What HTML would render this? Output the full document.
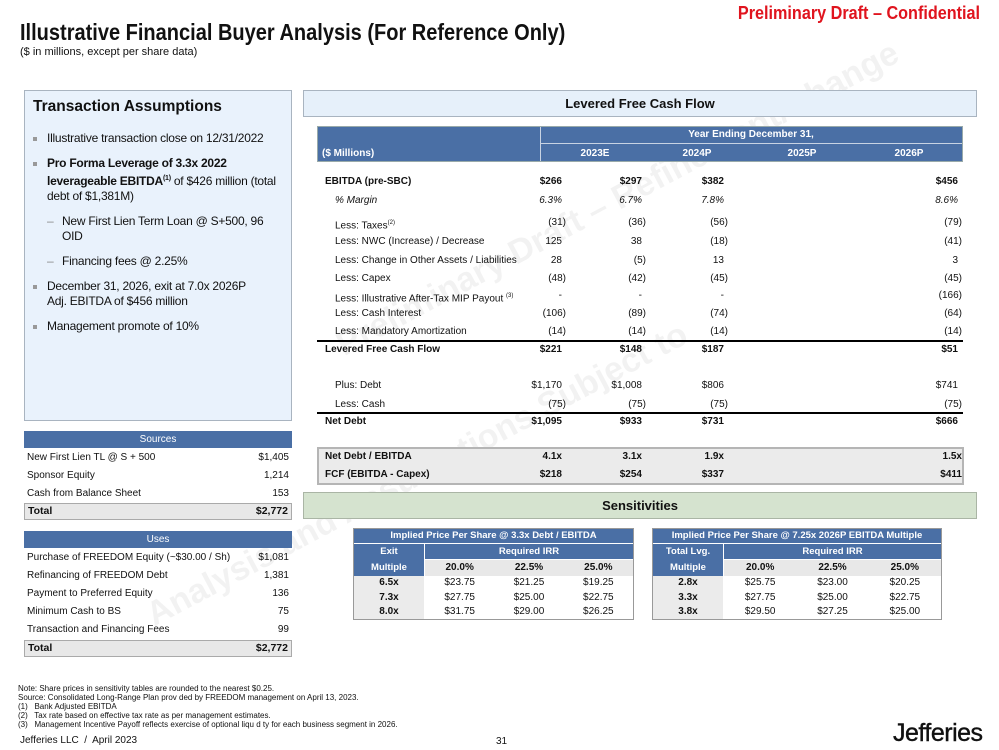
<!DOCTYPE html>
<html><head><meta charset="utf-8"><style>
*{margin:0;padding:0;box-sizing:border-box}
body{width:999px;height:750px;position:relative;background:#fff;font-family:"Liberation Sans Narrow","Liberation Sans",sans-serif;color:#111;overflow:hidden}
.a{position:absolute;white-space:nowrap}
.n{font-family:"Liberation Sans",sans-serif}
.blue{background:#4a6fa5;color:#fff}
.r{position:absolute;font-size:10px;line-height:12px;white-space:nowrap}
.b{font-weight:bold}
</style></head><body>
<div class="a b" style="right:19px;top:3px;font-size:18px;color:#e0141e;transform:scaleX(0.9);transform-origin:right top">Preliminary Draft – Confidential</div>
<div class="a b" style="left:20px;top:19px;font-size:23px;transform:scaleX(0.87);transform-origin:left top">Illustrative Financial Buyer Analysis (For Reference Only)</div>
<div class="a" style="left:20px;top:46px;font-size:11px">($ in millions, except per share data)</div>

<!-- watermark -->
<div class="a b" style="left:330px;top:330px;font-size:34px;color:rgba(0,0,0,0.05);transform:rotate(-28deg);transform-origin:left top">Preliminary Draft – Refinement/Change</div>
<div class="a b" style="left:140px;top:600px;font-size:34px;color:rgba(0,0,0,0.05);transform:rotate(-28deg);transform-origin:left top">Analysis and Assumptions Subject to</div>

<!-- Transaction assumptions -->
<div class="a" style="left:24px;top:90px;width:268px;height:331px;background:#e9f2fc;border:1px solid #a9b4c0"></div>
<div class="a b" style="left:33px;top:98px;font-size:15.5px">Transaction Assumptions</div>
<div class="a n" style="left:33px;top:131px;width:256px;font-size:12px;line-height:15px;white-space:normal;letter-spacing:-0.25px">
<div style="position:relative;padding-left:14px;margin-bottom:10px"><span style="position:absolute;left:0;top:6px;width:4px;height:4px;background:#999"></span>Illustrative transaction close on 12/31/2022</div>
<div style="position:relative;padding-left:14px;margin-bottom:10px"><span style="position:absolute;left:0;top:6px;width:4px;height:4px;background:#999"></span><b>Pro Forma Leverage of 3.3x 2022 leverageable EBITDA<sup style="font-size:7px">(1)</sup></b> of $426 million (total debt of $1,381M)</div>
<div style="position:relative;padding-left:29px;margin-bottom:10px"><span style="position:absolute;left:14px;top:0;color:#888">–</span>New First Lien Term Loan @ S+500, 96<br>OID</div>
<div style="position:relative;padding-left:29px;margin-bottom:10px"><span style="position:absolute;left:14px;top:0;color:#888">–</span>Financing fees @ 2.25%</div>
<div style="position:relative;padding-left:14px;margin-bottom:10px"><span style="position:absolute;left:0;top:6px;width:4px;height:4px;background:#999"></span>December 31, 2026, exit at 7.0x 2026P<br>Adj. EBITDA of $456 million</div>
<div style="position:relative;padding-left:14px"><span style="position:absolute;left:0;top:6px;width:4px;height:4px;background:#999"></span>Management promote of 10%</div>
</div>

<!-- Sources -->
<div class="a blue n" style="left:24px;top:431px;width:268px;height:17px;font-size:10px;line-height:17px;text-align:center">Sources</div>
<div class="a n" style="left:27px;top:449px;width:262px;font-size:10px;line-height:18px">
<div style="display:flex;justify-content:space-between"><span>New First Lien TL @ S + 500</span><span>$1,405</span></div>
<div style="display:flex;justify-content:space-between"><span>Sponsor Equity</span><span>1,214</span></div>
<div style="display:flex;justify-content:space-between"><span>Cash from Balance Sheet</span><span>153</span></div>
</div>
<div class="a b" style="left:24px;top:503px;width:268px;height:17px;background:#e8e8e8;border:1px solid #aaa;font-size:10.5px;line-height:15px;padding:0 3px;display:flex;justify-content:space-between"><span>Total</span><span>$2,772</span></div>

<!-- Uses -->
<div class="a blue n" style="left:24px;top:531px;width:268px;height:17px;font-size:10px;line-height:17px;text-align:center">Uses</div>
<div class="a n" style="left:27px;top:549px;width:262px;font-size:10px;line-height:18px">
<div style="display:flex;justify-content:space-between"><span>Purchase of FREEDOM Equity (~$30.00 / Sh)</span><span>$1,081</span></div>
<div style="display:flex;justify-content:space-between"><span>Refinancing of FREEDOM Debt</span><span>1,381</span></div>
<div style="display:flex;justify-content:space-between"><span>Payment to Preferred Equity</span><span>136</span></div>
<div style="display:flex;justify-content:space-between"><span>Minimum Cash to BS</span><span>75</span></div>
<div style="display:flex;justify-content:space-between"><span>Transaction and Financing Fees</span><span>99</span></div>
</div>
<div class="a b" style="left:24px;top:640px;width:268px;height:17px;background:#e8e8e8;border:1px solid #aaa;font-size:10.5px;line-height:15px;padding:0 3px;display:flex;justify-content:space-between"><span>Total</span><span>$2,772</span></div>

<!-- LFCF banner -->
<div class="a b" style="left:303px;top:90px;width:674px;height:27px;background:#e6f0fa;border:1px solid #a9b4c0;font-size:13px;line-height:25px;text-align:center">Levered Free Cash Flow</div>

<!-- table header -->
<div class="a blue" style="left:317px;top:126px;width:646px;height:36px;border:1px solid #9aa"></div>
<div class="a" style="left:540px;top:143px;width:422px;height:1px;background:#c8d3e3"></div>
<div class="a" style="left:540px;top:127px;width:1px;height:34px;background:#c8d3e3"></div>
<div class="r b" style="left:540px;width:422px;top:129px;text-align:center;color:#fff">Year Ending December 31,</div>
<div class="r b" style="left:322px;top:148px;color:#fff">($ Millions)</div>
<div class="r b" style="left:560px;width:70px;top:148px;text-align:center;color:#fff">2023E</div>
<div class="r b" style="left:662px;width:70px;top:148px;text-align:center;color:#fff">2024P</div>
<div class="r b" style="left:767px;width:70px;top:148px;text-align:center;color:#fff">2025P</div>
<div class="r b" style="left:874px;width:70px;top:148px;text-align:center;color:#fff">2026P</div>

<!-- rows -->
<div class="r b" style="left:325px;top:176px">EBITDA (pre-SBC)</div>
<div class="r b" style="right:437px;top:176px">$266</div><div class="r b" style="right:357px;top:176px">$297</div><div class="r b" style="right:275px;top:176px">$382</div><div class="r b" style="right:41px;top:176px">$456</div>
<div class="r" style="left:335px;top:195px;font-style:italic">% Margin</div>
<div class="r" style="right:437px;top:195px;font-style:italic">6.3%</div><div class="r" style="right:357px;top:195px;font-style:italic">6.7%</div><div class="r" style="right:275px;top:195px;font-style:italic">7.8%</div><div class="r" style="right:41px;top:195px;font-style:italic">8.6%</div>

<div class="r" style="left:335px;top:217px">Less: Taxes<sup style="font-size:6px">(2)</sup></div>
<div class="r" style="right:433px;top:217px">(31)</div><div class="r" style="right:353px;top:217px">(36)</div><div class="r" style="right:271px;top:217px">(56)</div><div class="r" style="right:37px;top:217px">(79)</div>
<div class="r" style="left:335px;top:236px">Less: NWC (Increase) / Decrease</div>
<div class="r" style="right:437px;top:236px">125</div><div class="r" style="right:357px;top:236px">38</div><div class="r" style="right:271px;top:236px">(18)</div><div class="r" style="right:37px;top:236px">(41)</div>
<div class="r" style="left:335px;top:255px">Less: Change in Other Assets / Liabilities</div>
<div class="r" style="right:437px;top:255px">28</div><div class="r" style="right:353px;top:255px">(5)</div><div class="r" style="right:275px;top:255px">13</div><div class="r" style="right:41px;top:255px">3</div>
<div class="r" style="left:335px;top:273px">Less: Capex</div>
<div class="r" style="right:433px;top:273px">(48)</div><div class="r" style="right:353px;top:273px">(42)</div><div class="r" style="right:271px;top:273px">(45)</div><div class="r" style="right:37px;top:273px">(45)</div>
<div class="r" style="left:335px;top:290px">Less: Illustrative After-Tax MIP Payout <sup style="font-size:6px">(3)</sup></div>
<div class="r" style="right:437px;top:290px">-</div><div class="r" style="right:357px;top:290px">-</div><div class="r" style="right:275px;top:290px">-</div><div class="r" style="right:37px;top:290px">(166)</div>
<div class="r" style="left:335px;top:308px">Less: Cash Interest</div>
<div class="r" style="right:433px;top:308px">(106)</div><div class="r" style="right:353px;top:308px">(89)</div><div class="r" style="right:271px;top:308px">(74)</div><div class="r" style="right:37px;top:308px">(64)</div>
<div class="r" style="left:335px;top:326px">Less: Mandatory Amortization</div>
<div class="r" style="right:433px;top:326px">(14)</div><div class="r" style="right:353px;top:326px">(14)</div><div class="r" style="right:271px;top:326px">(14)</div><div class="r" style="right:37px;top:326px">(14)</div>
<div class="a" style="left:317px;top:340px;width:646px;height:2px;background:#000"></div>
<div class="r b" style="left:325px;top:344px">Levered Free Cash Flow</div>
<div class="r b" style="right:437px;top:344px">$221</div><div class="r b" style="right:357px;top:344px">$148</div><div class="r b" style="right:275px;top:344px">$187</div><div class="r b" style="right:41px;top:344px">$51</div>

<div class="r" style="left:335px;top:380px">Plus: Debt</div>
<div class="r" style="right:437px;top:380px">$1,170</div><div class="r" style="right:357px;top:380px">$1,008</div><div class="r" style="right:275px;top:380px">$806</div><div class="r" style="right:41px;top:380px">$741</div>
<div class="r" style="left:335px;top:399px">Less: Cash</div>
<div class="r" style="right:433px;top:399px">(75)</div><div class="r" style="right:353px;top:399px">(75)</div><div class="r" style="right:271px;top:399px">(75)</div><div class="r" style="right:37px;top:399px">(75)</div>
<div class="a" style="left:317px;top:412px;width:646px;height:2px;background:#000"></div>
<div class="r b" style="left:325px;top:416px">Net Debt</div>
<div class="r b" style="right:437px;top:416px">$1,095</div><div class="r b" style="right:357px;top:416px">$933</div><div class="r b" style="right:275px;top:416px">$731</div><div class="r b" style="right:41px;top:416px">$666</div>

<div class="a" style="left:317px;top:447px;width:647px;height:38px;background:#ebebeb;border:2px solid #b5b5b5"></div>
<div class="r b" style="left:325px;top:451px">Net Debt / EBITDA</div>
<div class="r b" style="right:437px;top:451px">4.1x</div><div class="r b" style="right:357px;top:451px">3.1x</div><div class="r b" style="right:275px;top:451px">1.9x</div><div class="r b" style="right:37px;top:451px">1.5x</div>
<div class="r b" style="left:325px;top:469px">FCF (EBITDA - Capex)</div>
<div class="r b" style="right:437px;top:469px">$218</div><div class="r b" style="right:357px;top:469px">$254</div><div class="r b" style="right:275px;top:469px">$337</div><div class="r b" style="right:37px;top:469px">$411</div>

<!-- Sensitivities -->
<div class="a b" style="left:303px;top:492px;width:674px;height:27px;background:#d5e3cf;border:1px solid #aab5a5;font-size:13px;line-height:25px;text-align:center">Sensitivities</div>

<!-- table 1 -->
<div class="a" style="left:353px;top:528px;width:281px;height:92px;border:1px solid #999;background:#fff"></div>
<div class="a blue b" style="left:354px;top:529px;width:279px;height:14px;font-size:9.5px;line-height:14px;text-align:center">Implied Price Per Share @ 3.3x Debt / EBITDA</div>
<div class="a blue b" style="left:354px;top:544px;width:70px;height:32px;font-size:9.5px;line-height:16px;text-align:center">Exit<br>Multiple</div>
<div class="a blue b" style="left:425px;top:544px;width:208px;height:15px;font-size:9.5px;line-height:15px;text-align:center">Required IRR</div>
<div class="a b" style="left:425px;top:560px;width:208px;height:16px;background:#e8e8e8;font-size:10px;line-height:16px;display:flex"><span style="flex:1;text-align:center">20.0%</span><span style="flex:1;text-align:center">22.5%</span><span style="flex:1;text-align:center">25.0%</span></div>
<div class="a" style="left:354px;top:576px;width:70px;height:43px;background:#ebebeb;font-size:10px;line-height:14.5px;text-align:center;font-weight:bold">6.5x<br>7.3x<br>8.0x</div>
<div class="a" style="left:425px;top:576px;width:208px;font-size:10px;line-height:14.5px">
<div style="display:flex"><span style="flex:1;text-align:center">$23.75</span><span style="flex:1;text-align:center">$21.25</span><span style="flex:1;text-align:center">$19.25</span></div>
<div style="display:flex"><span style="flex:1;text-align:center">$27.75</span><span style="flex:1;text-align:center">$25.00</span><span style="flex:1;text-align:center">$22.75</span></div>
<div style="display:flex"><span style="flex:1;text-align:center">$31.75</span><span style="flex:1;text-align:center">$29.00</span><span style="flex:1;text-align:center">$26.25</span></div>
</div>

<!-- table 2 -->
<div class="a" style="left:652px;top:528px;width:290px;height:92px;border:1px solid #999;background:#fff"></div>
<div class="a blue b" style="left:653px;top:529px;width:288px;height:14px;font-size:9.5px;line-height:14px;text-align:center">Implied Price Per Share @ 7.25x 2026P EBITDA Multiple</div>
<div class="a blue b" style="left:653px;top:544px;width:70px;height:32px;font-size:9.5px;line-height:16px;text-align:center">Total Lvg.<br>Multiple</div>
<div class="a blue b" style="left:724px;top:544px;width:217px;height:15px;font-size:9.5px;line-height:15px;text-align:center">Required IRR</div>
<div class="a b" style="left:724px;top:560px;width:217px;height:16px;background:#e8e8e8;font-size:10px;line-height:16px;display:flex"><span style="flex:1;text-align:center">20.0%</span><span style="flex:1;text-align:center">22.5%</span><span style="flex:1;text-align:center">25.0%</span></div>
<div class="a" style="left:653px;top:576px;width:70px;height:43px;background:#ebebeb;font-size:10px;line-height:14.5px;text-align:center;font-weight:bold">2.8x<br>3.3x<br>3.8x</div>
<div class="a" style="left:724px;top:576px;width:217px;font-size:10px;line-height:14.5px">
<div style="display:flex"><span style="flex:1;text-align:center">$25.75</span><span style="flex:1;text-align:center">$23.00</span><span style="flex:1;text-align:center">$20.25</span></div>
<div style="display:flex"><span style="flex:1;text-align:center">$27.75</span><span style="flex:1;text-align:center">$25.00</span><span style="flex:1;text-align:center">$22.75</span></div>
<div style="display:flex"><span style="flex:1;text-align:center">$29.50</span><span style="flex:1;text-align:center">$27.25</span><span style="flex:1;text-align:center">$25.00</span></div>
</div>

<!-- footnotes -->
<div class="a" style="left:18px;top:684px;font-size:8px;line-height:9px">
<div>Note: Share prices in sensitivity tables are rounded to the nearest $0.25.</div>
<div>Source: Consolidated Long-Range Plan prov ded by FREEDOM management on April 13, 2023.</div>
<div>(1)&nbsp;&nbsp; Bank Adjusted EBITDA</div>
<div>(2)&nbsp;&nbsp; Tax rate based on effective tax rate as per management estimates.</div>
<div>(3)&nbsp;&nbsp; Management Incentive Payoff reflects exercise of optional liqu d ty for each business segment in 2026.</div>
</div>
<div class="a" style="left:20px;top:735px;font-size:10px">Jefferies LLC&nbsp; /&nbsp; April 2023</div>
<div class="a" style="left:496px;top:736px;font-size:10px">31</div>
<div class="a" style="left:893px;top:719px;font-size:25px;letter-spacing:-0.5px;-webkit-text-stroke:0.4px #111">Jefferies</div>
</body></html>
